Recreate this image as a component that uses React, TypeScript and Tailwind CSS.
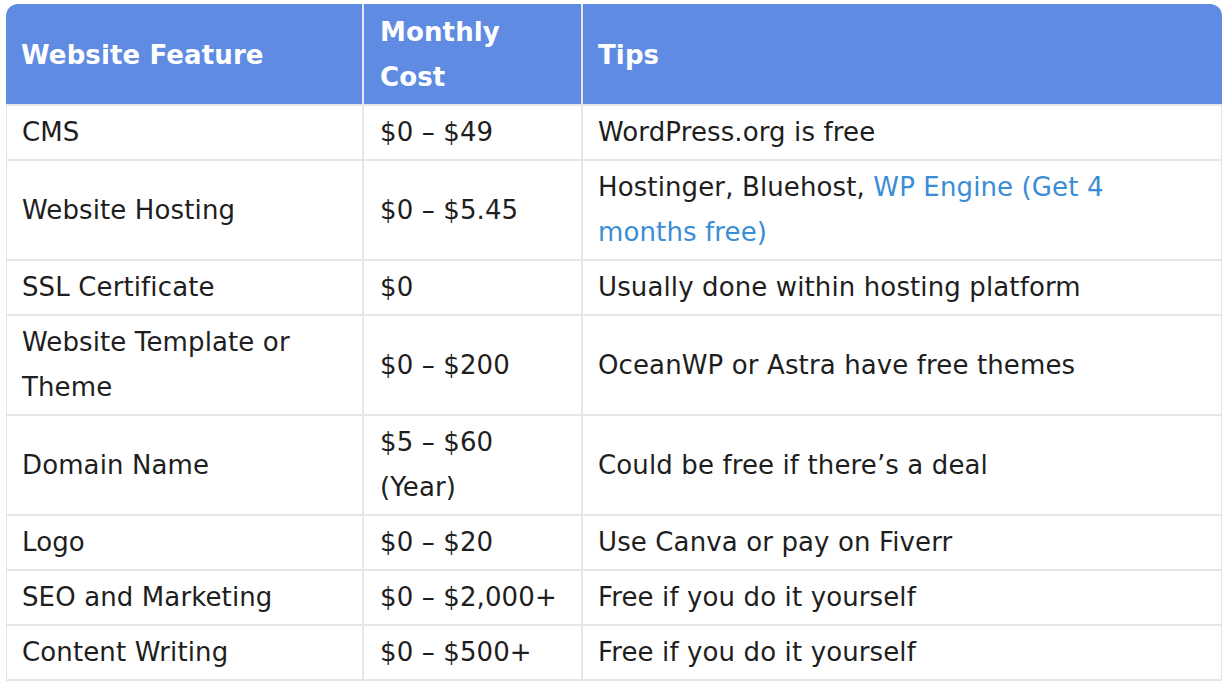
const rows: { feature: string; cost: string; tips: React.ReactNode }[] = [
  { feature: "CMS", cost: "$0 – $49", tips: "WordPress.org is free" },
  {
    feature: "Website Hosting",
    cost: "$0 – $5.45",
    tips: (
      <>
        Hostinger, Bluehost,{" "}
        <a href="#" className="text-[#3a8dd6]">
          WP Engine (Get 4 months free)
        </a>
      </>
    ),
  },
  { feature: "SSL Certificate", cost: "$0", tips: "Usually done within hosting platform" },
  { feature: "Website Template or Theme", cost: "$0 – $200", tips: "OceanWP or Astra have free themes" },
  { feature: "Domain Name", cost: "$5 – $60 (Year)", tips: "Could be free if there’s a deal" },
  { feature: "Logo", cost: "$0 – $20", tips: "Use Canva or pay on Fiverr" },
  { feature: "SEO and Marketing", cost: "$0 – $2,000+", tips: "Free if you do it yourself" },
  { feature: "Content Writing", cost: "$0 – $500+", tips: "Free if you do it yourself" },
];

export default function App() {
  return (
    <div className="min-h-screen bg-white pl-[6px] pt-[4px] pr-[5px] font-['DejaVu_Sans',Verdana,sans-serif] text-[26px] leading-[45px] tracking-[0.12px] text-[#1e1e1e]">
      <table className="w-[1216px] table-fixed border-separate border-spacing-0">
        <colgroup>
          <col className="w-[358px]" />
          <col className="w-[219px]" />
          <col className="w-[639px]" />
        </colgroup>
        <thead>
          <tr className="text-left text-white">
            <th className="rounded-tl-[12px] border-b-2 border-r-2 border-[#e6e6e6] bg-[#5f8be3] px-[15px] pt-[6px] pb-[4px] font-bold">
              Website Feature
            </th>
            <th className="border-b-2 border-r-2 border-[#e6e6e6] bg-[#5f8be3] px-[16px] pt-[6px] pb-[4px] font-bold">
              Monthly Cost
            </th>
            <th className="rounded-tr-[12px] border-b-2 border-[#e6e6e6] bg-[#5f8be3] px-[15px] pt-[6px] pb-[4px] font-bold">
              Tips
            </th>
          </tr>
        </thead>
        <tbody>
          {rows.map((r) => (
            <tr key={r.feature}>
              <td className="border-b-2 border-l border-r-2 border-[#e6e6e6] px-[15px] py-[4px]">{r.feature}</td>
              <td className="border-b-2 border-r-2 border-[#e6e6e6] px-[16px] py-[4px]">{r.cost}</td>
              <td className="border-b-2 border-r border-[#e6e6e6] pl-[15px] pr-[40px] py-[4px]">{r.tips}</td>
            </tr>
          ))}
        </tbody>
      </table>
    </div>
  );
}
